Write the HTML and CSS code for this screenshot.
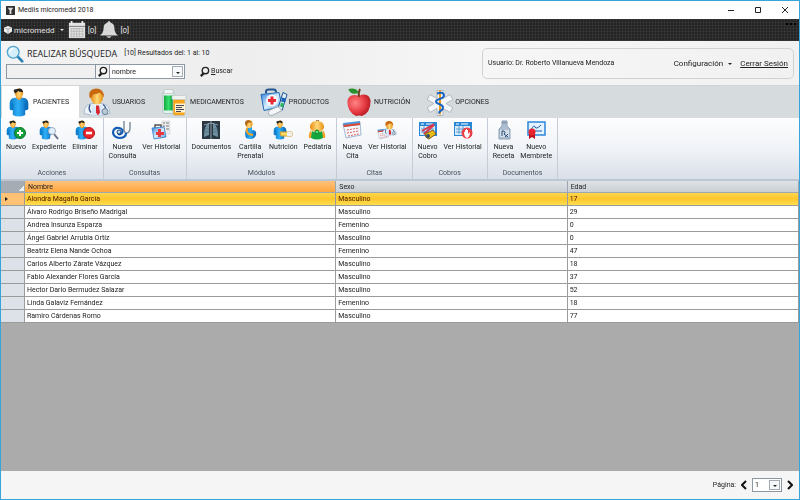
FILE: index.html
```html
<!DOCTYPE html>
<html lang="es">
<head>
    <meta charset="UTF-8">
    <meta name="viewport" content="width=device-width, initial-scale=1.0">
    <title>Mediis micromedd 2018</title>
    <link rel="stylesheet" href="styles.css">
</head>
<body>
    <!-- Iconos compartidos -->
    <svg class="sprite" aria-hidden="true">
        <defs>
            <linearGradient id="blue" x1="0" x2="1"><stop offset="0" stop-color="#0878c8"/><stop offset=".45" stop-color="#2fb0f8"/><stop offset="1" stop-color="#0562b4"/></linearGradient>
            <linearGradient id="skin" x1="0" x2="1"><stop offset="0" stop-color="#e88a10"/><stop offset=".5" stop-color="#ffd879"/><stop offset="1" stop-color="#e79010"/></linearGradient>
            <linearGradient id="box" x1="0" y1="0" x2="1" y2="1"><stop offset="0" stop-color="#2b7fd8"/><stop offset=".5" stop-color="#d9efff"/><stop offset="1" stop-color="#4a9be0"/></linearGradient>
            <linearGradient id="green" x1="0" x2="1"><stop offset="0" stop-color="#10a83c"/><stop offset=".5" stop-color="#35e070"/><stop offset="1" stop-color="#0c9434"/></linearGradient>
            <radialGradient id="red" cx=".35" cy=".4" r=".7"><stop offset="0" stop-color="#ff8585"/><stop offset=".6" stop-color="#e63a42"/><stop offset="1" stop-color="#b01720"/></radialGradient>
        </defs>
        <symbol id="person" viewBox="0 0 20 28">
            <path d="M1 15q0-5 5-5.500h8q5 .5 5 5.500v5q-1 2-3 1.500V26q-6 3-12 0v-4.500Q1 22 1 20z" fill="url(#blue)"/>
            <path d="M4 15v6M16 15v6" stroke="#0568b4" stroke-width=".8"/>
            <path d="M7 9.500q3 4 6 0L12 7H8z" fill="#f0a030"/>
            <ellipse cx="10" cy="5" rx="4" ry="4.500" fill="url(#skin)"/>
            <path d="M6 5Q3 1 8 1q5-2 6 3-4 0-5-1-1 2-3 2z" fill="#27231e"/>
        </symbol>
        <symbol id="magnifier" viewBox="0 0 12 12">
            <circle cx="7" cy="5" r="3.500" fill="none" stroke="currentColor" stroke-width="1.500"/>
            <path d="M5 8l-3 3" stroke="currentColor" stroke-width="2.500"/>
        </symbol>
        <symbol id="doctor" viewBox="0 0 28 28">
            <path d="M1 25q0-9 8-10h10q8 1 8 10-12 4-26 0z" fill="#edf3f8" stroke="#9db2c6" stroke-width=".8"/>
            <path d="M9 15l5 5 5-5v12H9z" fill="#d5e8fa"/>
            <path d="M13 17h3l1 7-2 3-2-3z" fill="#d72832"/>
            <path d="M7 16q-2 5 1 8M20 16q4 3 2 7" fill="none" stroke="#3a5d90" stroke-width="1.500"/>
            <circle cx="22" cy="23" r="3" fill="#bccbd6" stroke="#667e93"/>
            <ellipse cx="14" cy="9" rx="6" ry="7" fill="url(#skin)"/>
            <path d="M7 10Q4 1 13 0q8 0 8 9-2-3-4-5-4 2-7 2-1 3-3 4z" fill="#c8690f"/>
        </symbol>
        <symbol id="bottles" viewBox="0 0 28 28">
            <rect x="2" y="3" width="11" height="22" rx="2" fill="#e5f1ef" stroke="#9ab7b5" stroke-width=".7"/>
            <rect x="3" y="1" width="9" height="4" rx="1" fill="#f4f6f5" stroke="#b5c2c1" stroke-width=".7"/>
            <path d="M3 7h9v15H3z" fill="url(#green)"/>
            <rect x="12" y="10" width="12" height="17" rx="2" fill="#f8a51a" stroke="#b8c4c8" stroke-width=".7"/>
            <rect x="11" y="7" width="14" height="4" rx="1" fill="#f0f2ed" stroke="#c0c8c7" stroke-width=".7"/>
            <path d="M14 15h10v9H14z" fill="#fff4d2"/>
            <path d="M15 17h8M15 19h6M15 21h8M15 23h5" stroke="#334" stroke-width=".9"/>
        </symbol>
        <symbol id="kit" viewBox="0 0 28 28">
            <path d="M6 5V3q0-2 3-2h5q2 0 2 3" fill="none" stroke="#21548f" stroke-width="2"/>
            <path d="M1 6l18-2 3 14-18 4z" fill="url(#box)" stroke="#216bb6"/>
            <circle cx="12" cy="12" r="6" fill="#f1f7fd"/>
            <path d="M10.500 8h3v2.500H16v3h-2.500V16h-3v-2.500H8v-3h2.500z" fill="#e62b32"/>
            <path d="M23 4l4 2-5 16-4-2z" fill="#e3edf4" stroke="#175499"/>
            <path d="M22 9l4 1-1 4-4-1z" fill="#1c63b8"/>
            <path d="M21 14l3 1-1 4-3-1z" fill="#27b761"/>
            <path d="M9 22l9-4 4 4-10 5q-5 0-3-5z" fill="#f3f5f6" stroke="#a2adb5"/>
        </symbol>
        <symbol id="kitlist" viewBox="0 0 20 20">
            <path d="M11 1h8v13h-8z" fill="#eee" stroke="#c5c9ce" stroke-width=".5"/>
            <path d="M12 3h2m1 0h3M12 6h2m1 0h3M12 9h2m1 0h3" stroke="#555" stroke-width=".8"/>
            <path d="M4 8V5h6v3" fill="none" stroke="#555" stroke-width="1.500"/>
            <path d="M1 8l12-1 2 10-12 2z" fill="url(#box)" stroke="#337bc4" stroke-width=".8"/>
            <path d="M7 9h3v3h3v3h-3v2H7v-2H5v-3h2z" fill="#e63942"/>
        </symbol>
        <symbol id="apple" viewBox="0 0 28 30">
            <path d="M14 8q10-4 12 5 0 13-9 16-3-1-6 0Q2 25 2 14 3 5 14 8z" fill="url(#red)"/>
            <path d="M14 9q-1-4 1-8" fill="none" stroke="#713b19" stroke-width="2"/>
            <path d="M14 5Q5 8 3 1q8-2 11 4z" fill="#2b912d"/>
        </symbol>
        <symbol id="caduceus" viewBox="0 0 28 28">
            <path d="M11 2h6v8l7-4 3 5-7 4 7 4-3 5-7-4v7h-6v-7l-7 4-3-5 7-4-7-4 3-5 7 4z" fill="#f3f5f7" stroke="#b2b8bf"/>
            <path d="M14 2v24" stroke="#ed9b12" stroke-width="2"/>
            <path d="M11 5q7-2 7 2c0 4-8 3-8 6s7 2 7 6-4 2-4 6" fill="none" stroke="#1864c4" stroke-width="2"/>
        </symbol>
        <symbol id="stetho" viewBox="0 0 20 20">
            <path d="M12 1v8q0 4 3 4 3-1 3-5V2" fill="none" stroke="#80939f" stroke-width="1.500"/>
            <path d="M14 13q0 5-7 5-6-1-6-6 1-5 6-4 5 1 3 5-3 3-4 0" fill="none" stroke="#145cb7" stroke-width="2.200"/>
            <circle cx="7" cy="12" r="2" fill="#bfd9ed" stroke="#14447f"/>
        </symbol>
        <symbol id="xray" viewBox="0 0 20 20">
            <path d="M1 1h18v18H1z" fill="#2a3843"/>
            <path d="M8 3q-5 2-5 14l5-2zM12 3q5 2 5 14l-5-2z" fill="#6d91a3"/>
            <path d="M10 1v18M3 5l7-2 7 2" stroke="#9fb6be" stroke-width=".8" fill="none"/>
            <path d="M4 9h4m4 0h4M4 12h4m4 0h4" stroke="#4a6a7a" stroke-width=".7"/>
        </symbol>
        <symbol id="pregnant" viewBox="0 0 20 20">
            <path d="M7 8q-3 4-1 10 8 3 10-3 1-5-4-5V7z" fill="url(#blue)"/>
            <path d="M7 8q-2 6 6 7" stroke="#f2a52a" stroke-width="2" fill="none"/>
            <ellipse cx="9" cy="4" rx="3.500" ry="4" fill="url(#skin)"/>
            <path d="M6 6Q3 0 9 0l3 2-4 1z" fill="#b06a19"/>
        </symbol>
        <symbol id="baby" viewBox="0 0 20 20">
            <path d="M4 10q-3 4-2 8h4zM16 10q3 4 2 8h-4z" fill="#efa42c"/>
            <path d="M5 11q5 3 10 0l1 7q-6 3-12 0z" fill="#14a53d"/>
            <path d="M3 6q1-5 7-5t7 5q1 5-7 6-8-1-7-6z" fill="url(#skin)"/>
            <circle cx="10" cy="12" r="2" fill="#57df68" stroke="#087a2b"/>
            <path d="M9 1q2-2 3 0" stroke="#9c5814" fill="none"/>
        </symbol>
        <symbol id="calendar" viewBox="0 0 20 20">
            <path d="M1 4l17-2 1 13-15 3z" fill="#f5f8fb" stroke="#7c9dc0" stroke-width=".7"/>
            <path d="M1 3l17-2v4L2 7z" fill="#4d9bdc"/>
            <path d="M1 5l17-2v2L2 7z" fill="#e04534"/>
            <path d="M5 10l12-2M5 13l12-2M6 16l11-2" stroke="#e36060" stroke-dasharray="2 1"/>
        </symbol>
        <symbol id="billing" viewBox="0 0 20 20">
            <path d="M1 2h18v14H1z" fill="#2787d6"/>
            <path d="M2 6h15v9H2z" fill="#d9eaf7"/>
            <path d="M3 9h13M3 12h13M6 6v8M10 6v8" stroke="#5aa1d8"/>
            <path d="M3 4h3m2 0h7" stroke="#fff"/>
        </symbol>
        <symbol id="vial" viewBox="0 0 20 20">
            <path d="M8 1h5v5l3 3v10H5V9l3-3z" fill="#aebfd2" stroke="#8ea1b6"/>
            <path d="M8 1h5v3H8z" fill="#8fa3bb"/>
            <path d="M6 10h9v7H6z" fill="#d5dfe9"/>
            <path d="M8 16v-5h2q2 2 0 3l4 3m0-3l-3 3" fill="none" stroke="#284c75"/>
        </symbol>
        <symbol id="diploma" viewBox="0 0 20 20">
            <path d="M2 2h17v13H2z" fill="#e4f3ff" stroke="#2d87d8" stroke-width="1.500"/>
            <path d="M5 10q3-6 4-3t6-2M9 11h7" stroke="#145bab" fill="none"/>
            <path d="M3 13v6l3-2 3 2v-6" fill="#b9101c"/>
            <circle cx="6" cy="12" r="3.500" fill="#e9242f"/>
        </symbol>
    </svg>

    <div class="window">
        <header class="titlebar">
            <svg class="app-icon" viewBox="0 0 10 10"><path d="M0 0h10v10H0z" fill="#333"/><path d="M2 2h6L6 5v4H4V5z" fill="#ddd"/></svg>
            <h1 class="app-title">Mediis micromedd 2018</h1>
            <div class="window-buttons">
                <button type="button" aria-label="Minimizar"><svg viewBox="0 0 8 8"><path d="M1 4.500h6"/></svg></button>
                <button type="button" aria-label="Maximizar"><svg viewBox="0 0 8 8"><path d="M1.500 1.500h5v5h-5z"/></svg></button>
                <button type="button" aria-label="Cerrar"><svg viewBox="0 0 8 8"><path d="M1 1l6 6M7 1L1 7"/></svg></button>
            </div>
        </header>

        <nav class="topbar">
            <button type="button" class="brand">
                <svg class="cube" viewBox="0 0 10 10"><path d="M5 0l5 2v5L5 10 0 7V2z" fill="#eee"/><path d="M0 2l5 2 5-2M5 4v6" stroke="#777" fill="none" stroke-width=".7"/></svg>
                <span>micromedd</span>
                <i class="caret"></i>
            </button>
            <button type="button" class="notice" aria-label="Citas">
                <svg viewBox="0 0 20 20"><path d="M1 2h18v17H1z" fill="#e3e3e3"/><path d="M1 6h18" stroke="#777"/><path d="M4 0v4M16 0v4" stroke="#eee" stroke-width="2"/><path d="M3 8.500h14M3 11.500h14M3 14.500h14M3 17.500h14M3.500 8v10M6.500 8v10M9.500 8v10M12.500 8v10M16.500 8v10" stroke="#aaa" stroke-width=".7"/></svg>
                <span>[0]</span>
            </button>
            <button type="button" class="notice" aria-label="Avisos">
                <svg viewBox="0 0 20 20"><path d="M8 2q2-4 4 0 4 1 4 6 0 5 4 8H0q4-3 4-8 0-5 4-6z" fill="#d8d8d8"/><path d="M7 17h6q-3 4-6 0" fill="#ccc"/></svg>
                <span>[0]</span>
            </button>
            <button type="button" class="more" aria-label="Más"><i></i><i></i><i></i></button>
        </nav>

        <section class="searchbar">
            <form class="search">
                <div class="search-head">
                    <svg class="search-logo" viewBox="0 0 20 20"><path d="M12 12l6 6" stroke="#2c84b5" stroke-width="3" stroke-linecap="round"/><circle cx="8" cy="8" r="6.500" fill="#d5effb" stroke="#53a6cf" stroke-width="1.500"/><path d="M4 8q0-4 4-4" stroke="#fff" stroke-width="1.500" fill="none"/></svg>
                    <h2>REALIZAR BÚSQUEDA</h2>
                    <p class="results">[10] Resultados del: 1 al: 10</p>
                </div>
                <div class="search-row">
                    <div class="search-box">
                        <input type="text" class="search-input" aria-label="Texto a buscar" autofocus>
                        <button type="button" class="search-icon" aria-label="Buscar texto"><svg><use href="#magnifier"/></svg></button>
                        <span class="select-wrap field-select">
                            <select aria-label="Campo"><option>nombre</option></select>
                        </span>
                    </div>
                    <button type="button" class="btn-search"><svg><use href="#magnifier"/></svg><span><u>B</u>uscar</span></button>
                </div>
            </form>
            <div class="user-box">
                <span class="user-name">Usuario: Dr. Roberto Villanueva Mendoza</span>
                <button type="button" class="config">Configuración <i class="caret"></i></button>
                <a href="#" class="logout">Cerrar Sesión</a>
            </div>
        </section>

        <nav class="tabs">
            <button type="button" class="tab active"><svg><use href="#person"/></svg>PACIENTES</button>
            <button type="button" class="tab"><svg><use href="#doctor"/></svg>USUARIOS</button>
            <button type="button" class="tab"><svg><use href="#bottles"/></svg>MEDICAMENTOS</button>
            <button type="button" class="tab"><svg><use href="#kit"/></svg>PRODUCTOS</button>
            <button type="button" class="tab"><svg><use href="#apple"/></svg>NUTRICIÓN</button>
            <button type="button" class="tab"><svg><use href="#caduceus"/></svg>OPCIONES</button>
        </nav>

        <div class="ribbon">
            <section class="group">
                <div class="tools">
                    <button type="button" class="tool"><svg viewBox="0 0 20 20"><use href="#person" width="14" height="20"/><circle cx="14" cy="13" r="5.500" fill="#16a13b" stroke="#08752a"/><path d="M14 10v6M11 13h6" stroke="#fff" stroke-width="2"/></svg>Nuevo</button>
                    <button type="button" class="tool"><svg viewBox="0 0 20 20"><use href="#person" width="14" height="20"/><path d="M15 14l4 5" stroke="#68708f" stroke-width="2"/><circle cx="13" cy="11" r="3.500" fill="#e0f2ff" stroke="#a1adbd"/></svg>Expediente</button>
                    <button type="button" class="tool"><svg viewBox="0 0 20 20"><use href="#person" width="14" height="20"/><circle cx="14" cy="13" r="5.500" fill="#e8292e" stroke="#af151b"/><path d="M11 13h6" stroke="#fff" stroke-width="2.500"/></svg>Eliminar</button>
                </div>
                <h3>Acciones</h3>
            </section>
            <section class="group">
                <div class="tools">
                    <button type="button" class="tool"><svg><use href="#stetho"/></svg>Nueva<br>Consulta</button>
                    <button type="button" class="tool"><svg><use href="#kitlist"/></svg>Ver Historial</button>
                </div>
                <h3>Consultas</h3>
            </section>
            <section class="group">
                <div class="tools">
                    <button type="button" class="tool"><svg><use href="#xray"/></svg>Documentos</button>
                    <button type="button" class="tool"><svg><use href="#pregnant"/></svg>Cartilla<br>Prenatal</button>
                    <button type="button" class="tool"><svg viewBox="0 0 20 20"><use href="#person" width="14" height="20"/><path d="M7 12h12v4H8z" fill="#f8db68" stroke="#d89e24"/><path d="M14 12h5v4h-5z" fill="#eceff0"/></svg>Nutrición</button>
                    <button type="button" class="tool"><svg><use href="#baby"/></svg>Pediatría</button>
                </div>
                <h3>Módulos</h3>
            </section>
            <section class="group">
                <div class="tools">
                    <button type="button" class="tool"><svg><use href="#calendar"/></svg>Nueva<br>Cita</button>
                    <button type="button" class="tool"><svg viewBox="0 0 20 20"><use href="#calendar" y="8" width="12" height="12"/><use href="#doctor" x="5" width="15" height="17"/></svg>Ver Historial</button>
                </div>
                <h3>Citas</h3>
            </section>
            <section class="group">
                <div class="tools">
                    <button type="button" class="tool"><svg viewBox="0 0 20 20"><use href="#billing" width="20" height="20"/><path d="M4 11l12-7M6 14l10-9" stroke="#d63950" stroke-width="2"/><path d="M7 14l8-4 3 4-7 5q-4-1-4-5z" fill="#edbb18" stroke="#80601e"/><circle cx="10" cy="16" r="2" fill="#344d6a"/></svg>Nuevo<br>Cobro</button>
                    <button type="button" class="tool"><svg viewBox="0 0 20 20"><use href="#billing" width="20" height="20"/><circle cx="14" cy="13" r="5.500" fill="#e84045"/><path d="M11 12q1-1 1 1v-3h1v3-4h1v4-3h1v4l2-2q0 5-3 6-3-1-3-6z" fill="#fff"/></svg>Ver Historial</button>
                </div>
                <h3>Cobros</h3>
            </section>
            <section class="group">
                <div class="tools">
                    <button type="button" class="tool"><svg><use href="#vial"/></svg>Nueva<br>Receta</button>
                    <button type="button" class="tool"><svg><use href="#diploma"/></svg>Nuevo<br>Membrete</button>
                </div>
                <h3>Documentos</h3>
            </section>
        </div>

        <main class="grid-area">
            <table class="grid">
                <colgroup><col class="col-mark"><col class="col-name"><col class="col-sex"><col></colgroup>
                <thead>
                    <tr><th class="corner"></th><th class="sorted">Nombre</th><th>Sexo</th><th>Edad</th></tr>
                </thead>
                <tbody>
                    <tr class="selected"><td class="mark"></td><td>Alondra Magaña García</td><td>Masculino</td><td>17</td></tr>
                    <tr><td class="mark"></td><td>Álvaro Rodrigo Briseño Madrigal</td><td>Masculino</td><td>29</td></tr>
                    <tr><td class="mark"></td><td>Andrea Insunza Esparza</td><td>Femenino</td><td>0</td></tr>
                    <tr><td class="mark"></td><td>Ángel Gabriel Arrubia Ortíz</td><td>Masculino</td><td>0</td></tr>
                    <tr><td class="mark"></td><td>Beatriz Elena Nande Ochoa</td><td>Femenino</td><td>47</td></tr>
                    <tr><td class="mark"></td><td>Carlos Alberto Zárate Vázquez</td><td>Masculino</td><td>18</td></tr>
                    <tr><td class="mark"></td><td>Fabio Alexander Flores García</td><td>Masculino</td><td>37</td></tr>
                    <tr><td class="mark"></td><td>Hector Dario Bermudez Salazar</td><td>Masculino</td><td>52</td></tr>
                    <tr><td class="mark"></td><td>Linda Galaviz Fernández</td><td>Femenino</td><td>18</td></tr>
                    <tr><td class="mark"></td><td>Ramiro Cárdenas Romo</td><td>Masculino</td><td>77</td></tr>
                </tbody>
            </table>
        </main>

        <footer class="pager">
            <label for="page">Página:</label>
            <button type="button" aria-label="Anterior"><svg viewBox="0 0 6 10"><path d="M5 1L1 5l4 4"/></svg></button>
            <span class="select-wrap page-select">
                <select id="page"><option>1</option></select>
            </span>
            <button type="button" aria-label="Siguiente"><svg viewBox="0 0 6 10"><path d="M1 1l4 4-4 4"/></svg></button>
        </footer>
    </div>
</body>
</html>
```
FILE: styles.css
```css
* {
    margin: 0;
    padding: 0;
    box-sizing: border-box;
}
body {
    font-family: Roboto, 'Open Sans', sans-serif;
    font-size: 7px;
    line-height: 9px;
    color: #222;
}
button, input, select {
    font: inherit;
    color: inherit;
    border: 0;
    background: none;
}
svg {
    display: block;
    flex: none;
}
.sprite {
    position: absolute;
    width: 0;
    height: 0;
}
.window {
    display: flex;
    flex-direction: column;
    min-height: 100vh;
    border: 1px solid #35a5dc;
    background: #f4f4f4;
}

/* Barra de título */
.titlebar {
    display: flex;
    align-items: center;
    gap: 3px;
    height: 18px;
    padding: 0 10px 0 5px;
    background: #fff;
}
.app-icon {
    width: 9px;
    height: 9px;
}
.app-title {
    font-size: 7px;
    font-weight: 400;
}
.window-buttons {
    display: flex;
    gap: 19px;
    margin-left: auto;
}
.window-buttons svg {
    width: 8px;
    height: 8px;
    fill: none;
    stroke: #222;
    stroke-width: 1;
}

/* Barra oscura */
.topbar {
    display: flex;
    align-items: center;
    gap: 4px;
    height: 22px;
    padding: 0 3px;
    color: #e2e2e2;
    font-size: 8px;
    background-color: #242424;
    background-image: repeating-linear-gradient(0deg, rgba(255, 255, 255, 0.05) 0 1px, transparent 1px 3px), repeating-linear-gradient(90deg, rgba(255, 255, 255, 0.05) 0 1px, transparent 1px 3px);
}
.brand, .notice {
    display: flex;
    align-items: center;
    gap: 2px;
}
.cube {
    width: 8px;
    height: 8px;
}
.notice svg {
    width: 18px;
    height: 18px;
}
.caret {
    display: inline-block;
    border: 2px solid transparent;
    border-top-color: currentColor;
    border-bottom: 0;
    margin-left: 3px;
    vertical-align: middle;
}
.more {
    display: flex;
    align-self: flex-start;
    gap: 2px;
    margin-left: auto;
    padding-top: 4px;
}
.more i {
    width: 2px;
    height: 2px;
    background: #000;
}

/* Búsqueda */
.searchbar {
    display: flex;
    justify-content: space-between;
    height: 44px;
    padding: 2px 5px 0;
    background: linear-gradient(90deg, #f3f3f3, #eee 30%, #f6f6f6 60%, #f1f1f1);
}
.search-head {
    display: flex;
    align-items: center;
    gap: 3px;
    height: 21px;
}
.search-logo {
    width: 18px;
    height: 18px;
}
.search-head h2 {
    font-family: 'Open Sans', sans-serif;
    font-size: 9px;
    font-weight: 400;
}
.results {
    margin-left: 4px;
}
.search-row {
    display: flex;
    align-items: center;
    gap: 14px;
}
.search-box {
    display: flex;
    height: 15px;
    border: 1px solid #8d97a3;
    background: #fff;
}
.search-input {
    width: 88px;
    padding: 0 2px;
    background: #f0f0f0;
    outline: 0;
}
.search-icon {
    padding: 0 1px;
    border: 1px solid #8d97a3;
    border-width: 0 1px;
    background: #f4f4f4;
}
.search-icon svg, .btn-search svg {
    width: 11px;
    height: 11px;
}
.select-wrap {
    display: flex;
    position: relative;
}
.select-wrap select {
    width: 100%;
    padding: 1px 2px 0;
    appearance: none;
    outline: 0;
}
.select-wrap::before {
    content: "";
    position: absolute;
    top: 1px;
    right: 1px;
    bottom: 1px;
    width: 9px;
    border: 1px solid #a4abb5;
    background: #f7f8fa;
    pointer-events: none;
}
.select-wrap::after {
    content: "";
    position: absolute;
    top: 50%;
    right: 4px;
    border: 2px solid transparent;
    border-top-color: #222;
    border-bottom: 0;
    pointer-events: none;
}
.field-select {
    width: 74px;
}
.btn-search {
    display: flex;
    align-items: center;
    gap: 1px;
}
.user-box {
    display: flex;
    align-items: center;
    align-self: flex-start;
    flex: 0 1 312px;
    height: 31px;
    margin-top: 5px;
    padding: 0 5px;
    border: 1px solid #d2d2d2;
    border-radius: 5px;
}
.user-name {
    margin-right: auto;
}
.config {
    margin-right: 8px;
    font-size: 8px;
}
.logout {
    color: #222;
    font-size: 8px;
}

/* Pestañas */
.tabs {
    display: flex;
    height: 33px;
    padding-left: 1px;
    background: #d6dbde;
    border-top: 1px solid #cfd4d7;
}
.tab {
    display: flex;
    align-items: center;
    gap: 1px;
    padding: 0 12px 0 4px;
}
.tab svg {
    width: 28px;
    height: 29px;
}
.tab.active {
    padding-right: 10px;
    background: #fff;
}
.tab.active svg {
    width: 26px;
}

/* Cinta de herramientas */
.ribbon {
    display: flex;
    height: 63px;
    background: linear-gradient(#fdfdfe, #f0f3f7 50%, #dae0e8);
    border-bottom: 2px solid #bcc7d2;
}
.group {
    display: flex;
    flex-direction: column;
    justify-content: space-between;
    padding: 2px 5px 0;
    border-right: 1px solid #c5ccd5;
}
.tools {
    display: flex;
    align-items: flex-start;
    gap: 6px;
}
.tool {
    white-space: nowrap;
}
.tool svg {
    width: 20px;
    height: 20px;
    margin: 0 auto 3px;
}
.group h3 {
    height: 10px;
    color: #48525f;
    font-size: 7px;
    font-weight: 400;
    text-align: center;
}

/* Tabla de pacientes */
.grid-area {
    flex: 1;
    background: #ababab;
}
.grid {
    width: 100%;
    table-layout: fixed;
    border-spacing: 0;
    background: #fff;
}
.col-mark {
    width: 24px;
}
.col-name {
    width: 39%;
}
.col-sex {
    width: 29%;
}
.grid th {
    height: 12px;
    padding: 2px 3px 0;
    border-right: 1px solid #9ea7b1;
    border-bottom: 1px solid #9ea7b1;
    background: linear-gradient(#dfe3e7, #c9cfd5);
    font-weight: 400;
    text-align: left;
}
.grid .sorted {
    background: linear-gradient(#ffc27c, #ffa63c);
}
.grid .corner {
    background: linear-gradient(135deg, transparent 70%, #edf0f3 70%) right / 9px 9px no-repeat, #a5acb4;
}
.grid td {
    height: 13px;
    padding: 0 2px;
    border-right: 1px solid #9b9b9b;
    border-bottom: 1px solid #9b9b9b;
}
.grid td.mark {
    background: #dce2e8;
}
.selected td {
    background: linear-gradient(#ffd84a, #fdc52f 50%, #ffdf4d);
    color: #4a2000;
}
.grid .selected .mark {
    background: #ffc173;
}
.selected .mark::before {
    content: "";
    display: block;
    width: 0;
    margin-left: 2px;
    border: 2px solid transparent;
    border-left: 3px solid #222;
    border-right: 0;
}

/* Paginación */
.pager {
    display: flex;
    justify-content: flex-end;
    align-items: center;
    gap: 5px;
    height: 28px;
    padding: 0 6px;
    background: #f5f5f5;
}
.pager svg {
    width: 6px;
    height: 10px;
    fill: none;
    stroke: #111;
    stroke-width: 2;
}
.page-select {
    width: 30px;
    height: 14px;
    border: 1px solid #8d97a3;
    background: #fff;
}
```
